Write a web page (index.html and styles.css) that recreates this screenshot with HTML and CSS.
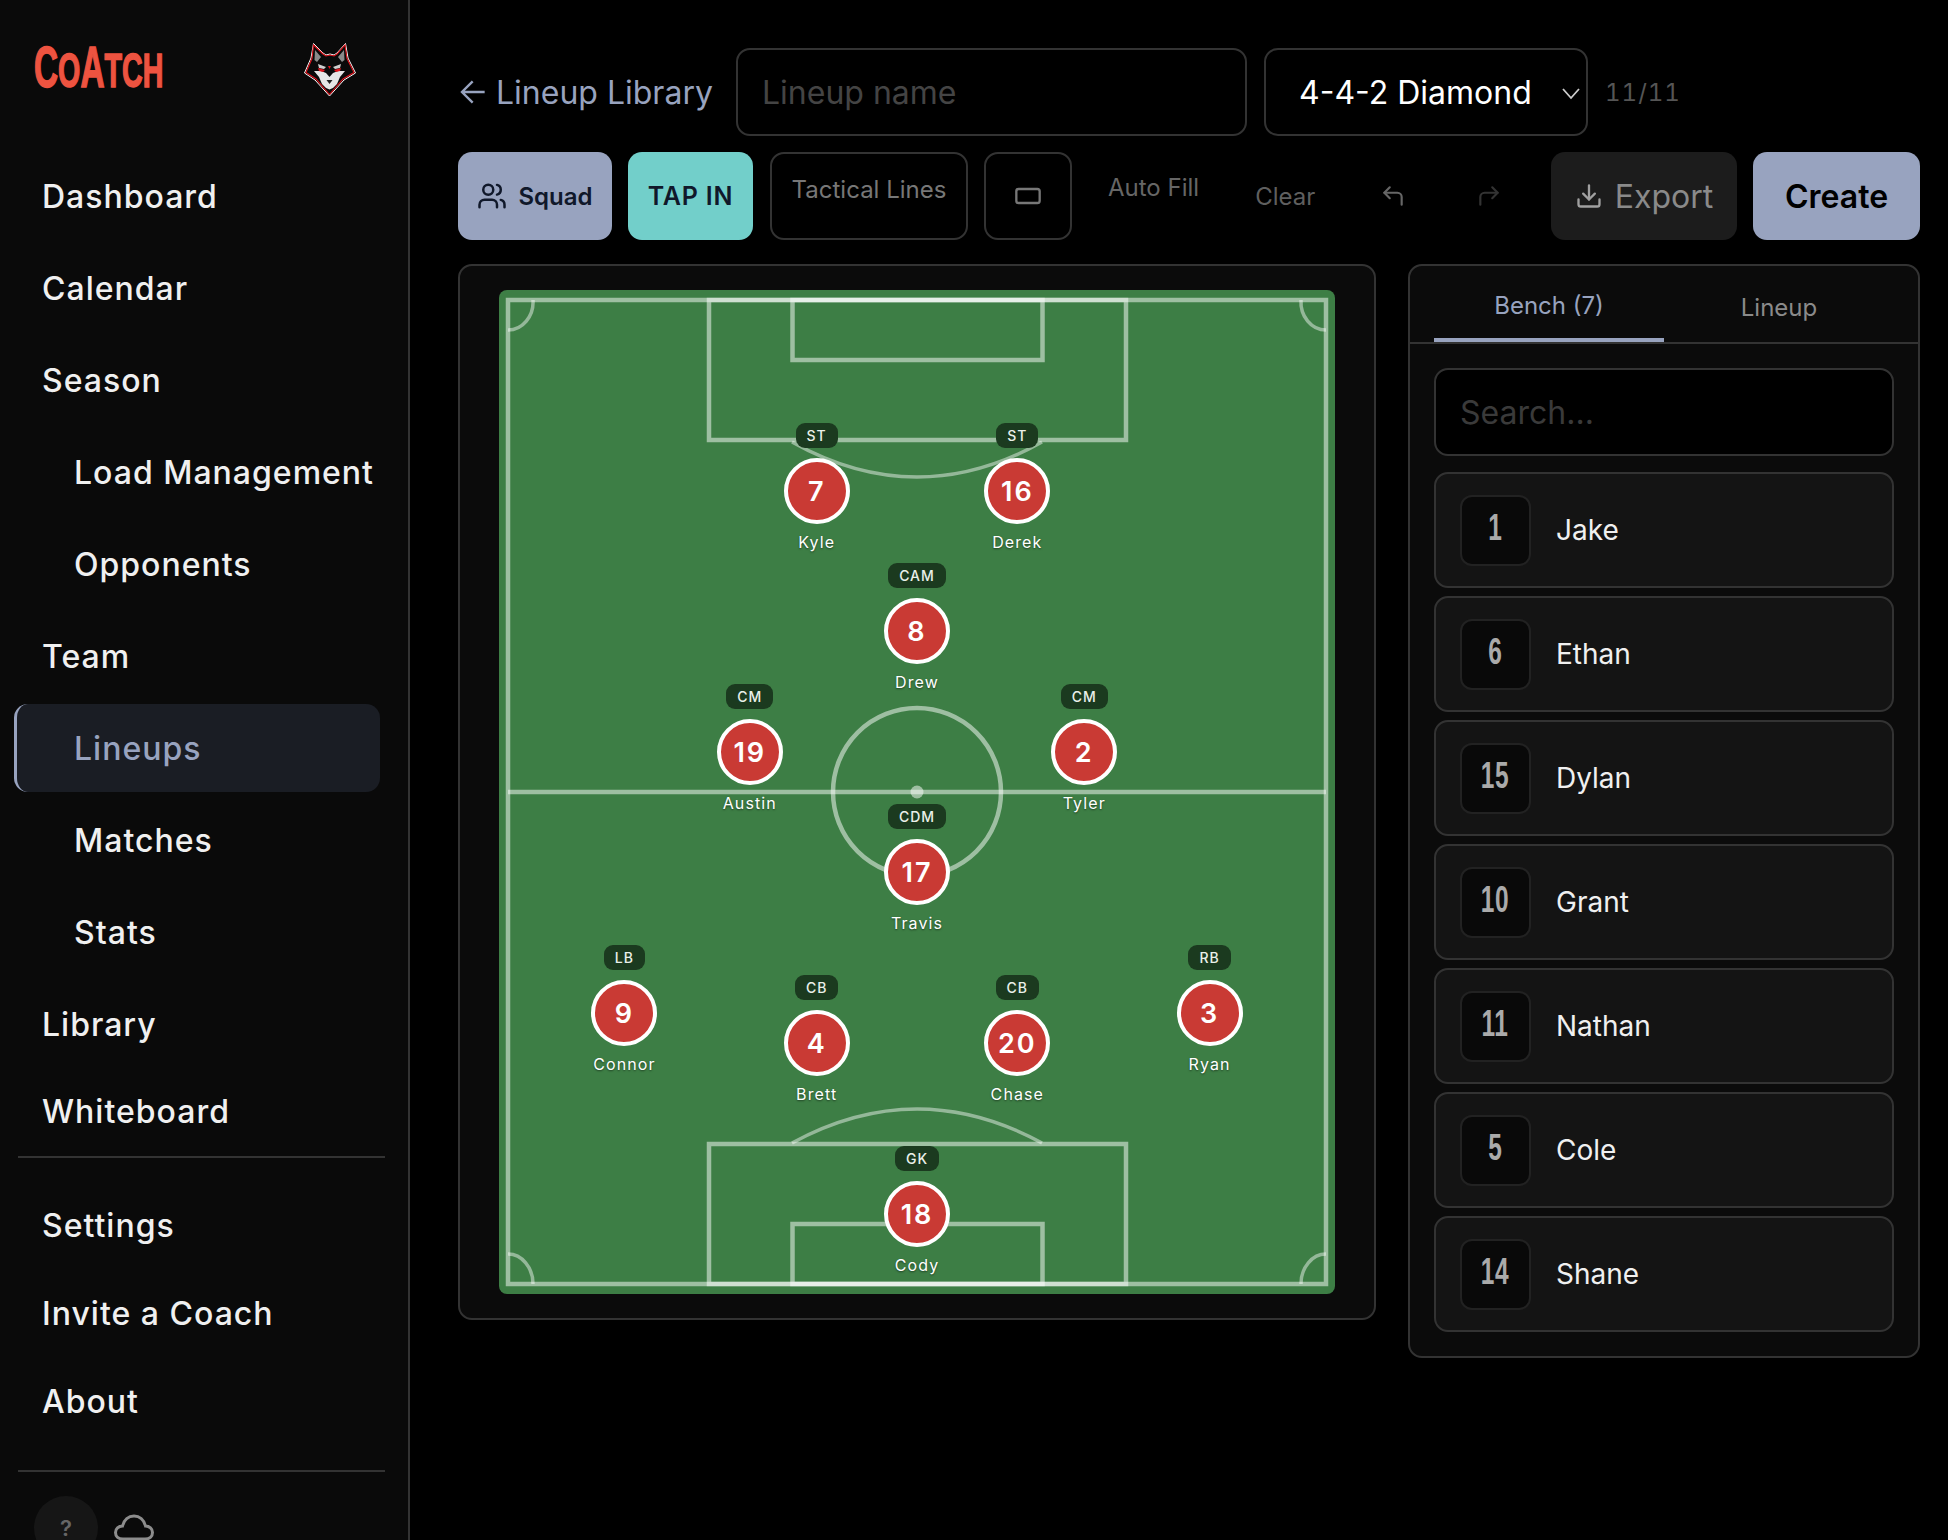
FILE: index.html
```html
<!DOCTYPE html>
<html lang="en">
<head>
<meta charset="utf-8">
<title>Lineups</title>
<link rel="stylesheet" href="styles.css">
</head>
<body>
<div class="app">
  <aside class="sidebar">
    <div class="brand">
      <div class="wordmark"><span class="cap">C</span>O<span class="cap">A</span>TCH</div>
      <svg class="wolf" viewBox="23 12 54 56" aria-hidden="true">
        <path d="M33.5 13.5 43 23 46 25 50 24 54 25 57 23 65.5 13.5 68 28 75.5 43 64 50 49.500 66 35 50 24.500 43 31 28Z" fill="#000" stroke="#fff" stroke-width="1"/>
        <path d="M33.5 15 43 24 46 26 50 25 54 26 57 24 65 15 67 28.500 74 42.500 63 49 49.500 64.500 36 49 26 42.500 32 28.500Z" fill="#0a0a0a" stroke="#e0141c" stroke-width="1.100"/>
        <path d="M35 20 41 27 37 32 34.500 30Z M64 20 58 27 62 32 64.500 30Z" fill="#8a8a8a"/>
        <path d="M38 34 46 37 44 39 39 38Z M61 34 53 37 55 39 60 38Z" fill="#cfcfcf"/>
        <path d="M34 41 41 41 46 43 49.500 47 53 43 58 41 65 41 60 47 57 54 53 58 49.500 59.500 46 58 42 54 39 47Z" fill="#e6e6e6"/>
        <path d="M38 38 45 40 43 42 39 41Z M61 38 54 40 56 42 60 41Z M48 36 51 36 49.500 39Z" fill="#e0141c"/>
        <path d="M46.500 50 52.500 50 49.500 54Z" fill="#222"/>
      </svg>
    </div>
    <nav class="nav">
      <a class="nav-item">Dashboard</a>
      <a class="nav-item">Calendar</a>
      <a class="nav-item">Season</a>
      <a class="nav-item sub">Load Management</a>
      <a class="nav-item sub">Opponents</a>
      <a class="nav-item">Team</a>
      <a class="nav-item sub active">Lineups</a>
      <a class="nav-item sub">Matches</a>
      <a class="nav-item sub">Stats</a>
      <a class="nav-item">Library</a>
      <a class="nav-item tight">Whiteboard</a>
    </nav>
    <div class="rule rule-a"></div>
    <nav class="nav nav-b">
      <a class="nav-item tight">Settings</a>
      <a class="nav-item tight">Invite a Coach</a>
      <a class="nav-item tight">About</a>
    </nav>
    <div class="rule rule-b"></div>
    <div class="side-foot">
      <div class="help">?</div>
      <svg class="cloud" viewBox="0 0 40 30" aria-hidden="true"><path d="M9 25C4 25 1.500 22 1.500 18.500 1.500 15 4.500 12 8.500 12 10 6 14.500 2 20 2 25.500 2 30 6 31.500 12 35.500 12 38.500 15 38.500 18.500 38.500 22 36 25 31 25Z"/></svg>
    </div>
  </aside>

  <main class="main">
    <div class="row-top">
      <a class="back"><svg class="back-arrow" viewBox="0 0 24 24"><path d="M20 12H3M11 20l-8-8 8-8"/></svg>Lineup Library</a>
      <input class="field name-input" placeholder="Lineup name">
      <div class="field select"><span>4-4-2 Diamond</span><svg class="chev" viewBox="0 0 24 24"><path d="m4 8 8 9 8-9"/></svg></div>
      <span class="count">11/11</span>
    </div>

    <div class="row-tools">
      <button class="btn squad"><svg class="ico" viewBox="0 0 24 24"><path d="M16 21v-2a4 4 0 0 0-4-4H6a4 4 0 0 0-4 4v2"/><circle cx="9" cy="7" r="4"/><path d="M22 21v-2a4 4 0 0 0-3-3.870"/><path d="M16 3.130a4 4 0 0 1 0 7.750"/></svg>Squad</button>
      <button class="btn tap">TAP IN</button>
      <button class="btn outline lines">Tactical Lines</button>
      <button class="btn outline square"><svg class="ico" viewBox="0 0 24 24"><rect x="2" y="6" width="20" height="12" rx="2"/></svg></button>
      <span class="ghost autofill">Auto Fill</span>
      <span class="ghost clear">Clear</span>
      <svg class="ico undo" viewBox="0 0 24 24"><path d="M9 14 4 9l5-5"/><path d="M20 20v-7a4 4 0 0 0-4-4H4"/></svg>
      <svg class="ico redo" viewBox="0 0 24 24"><path d="m15 14 5-5-5-5"/><path d="M4 20v-7a4 4 0 0 1 4-4h12"/></svg>
      <button class="btn export"><svg class="ico" viewBox="0 0 24 24"><path d="M21 15v4a2 2 0 0 1-2 2H5a2 2 0 0 1-2-2v-4"/><path d="m7 10 5 5 5-5"/><path d="M12 15V3"/></svg>Export</button>
      <button class="btn create">Create</button>
    </div>

    <div class="panels">
      <section class="panel pitch-panel">
        <div class="pitch">
          <svg class="lines-svg" viewBox="0 0 836 1004" aria-hidden="true">
            <rect x="9" y="10" width="818" height="984"/>
            <rect x="210" y="10" width="417" height="140"/>
            <rect x="293.500" y="10" width="250" height="60"/>
            <rect x="210" y="854" width="417" height="140"/>
            <rect x="293.500" y="934" width="250" height="60"/>
            <line x1="9" y1="502" x2="827" y2="502"/>
            <circle cx="418" cy="502" r="84"/>
            <circle class="spot" cx="418" cy="502" r="6.500"/>
            <path class="thin" d="M293 152Q418 222 543 152"/>
            <path class="thin" d="M293 853Q418 785 543 853"/>
            <path class="thin" d="M34 10A25 28 0 0 1 9 40"/>
            <path class="thin" d="M802 10A25 28 0 0 0 827 40"/>
            <path class="thin" d="M34 994A25 30 0 0 0 9 964"/>
            <path class="thin" d="M802 994A25 30 0 0 1 827 964"/>
          </svg>
          <div class="token" style="left:38%;top:20%"><span class="pos">ST</span><span class="disc">7</span><span class="who">Kyle</span></div>
          <div class="token" style="left:62%;top:20%"><span class="pos">ST</span><span class="disc">16</span><span class="who">Derek</span></div>
          <div class="token" style="left:50%;top:34%"><span class="pos">CAM</span><span class="disc">8</span><span class="who">Drew</span></div>
          <div class="token" style="left:30%;top:46%"><span class="pos">CM</span><span class="disc">19</span><span class="who">Austin</span></div>
          <div class="token" style="left:70%;top:46%"><span class="pos">CM</span><span class="disc">2</span><span class="who">Tyler</span></div>
          <div class="token" style="left:50%;top:58%"><span class="pos">CDM</span><span class="disc">17</span><span class="who">Travis</span></div>
          <div class="token" style="left:15%;top:72%"><span class="pos">LB</span><span class="disc">9</span><span class="who">Connor</span></div>
          <div class="token" style="left:85%;top:72%"><span class="pos">RB</span><span class="disc">3</span><span class="who">Ryan</span></div>
          <div class="token" style="left:38%;top:75%"><span class="pos">CB</span><span class="disc">4</span><span class="who">Brett</span></div>
          <div class="token" style="left:62%;top:75%"><span class="pos">CB</span><span class="disc">20</span><span class="who">Chase</span></div>
          <div class="token" style="left:50%;top:92%"><span class="pos">GK</span><span class="disc">18</span><span class="who">Cody</span></div>
        </div>
      </section>

      <section class="panel bench">
        <div class="tabs">
          <div class="tab on">Bench (7)</div>
          <div class="tab">Lineup</div>
        </div>
        <div class="bench-body">
          <input class="search" placeholder="Search...">
          <div class="player"><span class="num"><span class="digits">1</span></span><span class="pname">Jake</span></div>
          <div class="player"><span class="num"><span class="digits">6</span></span><span class="pname">Ethan</span></div>
          <div class="player"><span class="num"><span class="digits">15</span></span><span class="pname">Dylan</span></div>
          <div class="player"><span class="num"><span class="digits">10</span></span><span class="pname">Grant</span></div>
          <div class="player"><span class="num"><span class="digits">11</span></span><span class="pname">Nathan</span></div>
          <div class="player"><span class="num"><span class="digits">5</span></span><span class="pname">Cole</span></div>
          <div class="player"><span class="num"><span class="digits">14</span></span><span class="pname">Shane</span></div>
        </div>
      </section>
    </div>
  </main>
</div>
</body>
</html>
```

FILE: styles.css
```css
* { box-sizing: border-box; }
html, body { margin: 0; height: 100%; background: #000; overflow: hidden; }
body { font-family: Inter, "Liberation Sans", sans-serif; color: #fff; }

.app { display: flex; height: 1540px; overflow: hidden; }

/* sidebar */
.sidebar {
  width: 410px; flex: none; height: 1540px; overflow: hidden;
  background: #0a0a0a; border-right: 2px solid #333;
  padding: 0 24px 0 14px;
}
.brand { height: 152px; display: flex; align-items: flex-start; position: relative; }
.wordmark {
  margin: 37px 0 0 20px; color: #ee5340; font-family: "Liberation Sans", sans-serif;
  font-weight: 700; font-size: 49px; line-height: 60px; white-space: nowrap;
  -webkit-text-stroke: 1.500px #ee5340; transform: scaleX(.585); transform-origin: left center;
}
.wordmark .cap { font-size: 57px; }
.wolf { position: absolute; left: 289px; top: 42px; width: 54px; height: 56px; }

.nav { display: flex; flex-direction: column; gap: 4px; }
.nav-b { gap: 0; margin-top: 23px; }
.nav-item {
  height: 88px; display: flex; align-items: center; padding-left: 25px;
  font-size: 32px; font-weight: 500; letter-spacing: 1px; color: #f0f0f0; white-space: nowrap;
  border-radius: 14px; border-left: 3px solid transparent;
}
.nav-item.sub { padding-left: 57px; }
.nav > .nav-item.tight:last-child { margin-top: -5px; }
.nav-b > .nav-item.tight:last-child { margin-top: 0; }
.nav-item.active { background: #1a1d24; color: #98a3bf; border-left-color: #98a3bf; width: 366px; }
.rule { height: 2px; background: #333; width: 367px; margin-left: 4px; }
.rule-a { margin-top: 1px; }
.rule-b { margin-top: 25px; }
.side-foot { display: flex; align-items: flex-start; margin: 24px 0 0 20px; }
.help {
  width: 64px; height: 64px; border-radius: 50%; background: #161616; color: #666;
  font-size: 22px; line-height: 22px; font-weight: 600; text-align: center; padding-top: 21px;
}
.cloud { width: 40px; height: 30px; margin: 18px 0 0 16px; fill: none; stroke: #8c8c8c; stroke-width: 3; }

/* main */
.main { flex: 1; min-width: 0; padding: 48px 28px 0 48px; display: flex; flex-direction: column; }
.row-top { display: flex; align-items: center; height: 88px; }
.back { display: flex; align-items: center; color: #98a3bf; font-size: 32px; white-space: nowrap; margin: 0 24px 0 0; width: 254px; }
.back-arrow { width: 32px; height: 32px; flex: none; fill: none; stroke: #98a3bf; stroke-width: 1.800; margin-right: 6px; }
.field {
  height: 88px; border: 2px solid #333; border-radius: 14px; background: #000;
  font: 400 32px Inter, "Liberation Sans", sans-serif; color: #fff;
}
.name-input { width: 511px; padding: 0 24px; outline: none; }
.name-input::placeholder { color: #444; opacity: 1; }
.select { width: 324px; margin-left: 17px; display: flex; align-items: center; padding-left: 33px; position: relative; white-space: nowrap; }
.chev { position: absolute; right: 3px; top: 31px; width: 24px; height: 24px; fill: none; stroke: #ccc; stroke-width: 1.800; }
.count { margin-left: 17px; font-size: 24px; color: #555; letter-spacing: 1px; font-variant-numeric: tabular-nums; }

.row-tools { display: flex; align-items: center; margin-top: 16px; height: 88px; }
.btn {
  height: 88px; border: 0; border-radius: 14px; font-family: Inter, "Liberation Sans", sans-serif;
  display: flex; align-items: center; justify-content: center; white-space: nowrap; padding: 0;
}
.ico { width: 28px; height: 28px; fill: none; stroke: currentColor; stroke-width: 2; stroke-linecap: round; stroke-linejoin: round; flex: none; }
.squad { width: 154px; background: #98a3bf; color: #10182a; font-size: 24px; font-weight: 600; gap: 11px; }
.squad .ico { width: 30px; height: 30px; }
.tap { width: 125px; margin-left: 16px; background: #72cfca; color: #10182a; font-size: 25px; font-weight: 600; letter-spacing: .8px; }
.outline { background: #000; border: 2px solid #333; color: #777; }
.lines { width: 198px; margin-left: 17px; font-size: 24px; align-items: flex-start; padding-top: 21px; }
.square { width: 88px; margin-left: 16px; }
.ghost { font-size: 24px; color: #666; white-space: nowrap; }
.autofill { margin-left: 36px; margin-top: -18px; }
.clear { margin-left: 56px; color: #5f5f5f; }
.undo { width: 26px; height: 26px; color: #666; margin-left: 65px; }
.redo { width: 26px; height: 26px; color: #333; margin-left: 70px; }
.export { width: 186px; margin-left: auto; background: #1c1c1c; color: #8a8a8a; font-size: 32px; gap: 12px; }
.export .ico { color: #a0a0a0; }
.create { width: 167px; margin-left: 16px; background: #98a3bf; color: #000; font-size: 32px; font-weight: 600; }

/* panels */
.panels { display: flex; align-items: flex-start; gap: 32px; margin-top: 24px; }
.panel { border: 2px solid #333; border-radius: 14px; background: #0b0b0b; }
.pitch-panel { width: 918px; padding: 24px 39px; }
.pitch { position: relative; width: 836px; height: 1004px; background: #3d7e45; border-radius: 8px; }
.lines-svg { position: absolute; inset: 0; width: 100%; height: 100%; fill: none; stroke: rgba(255,255,255,.5); stroke-width: 4.500; }
.lines-svg .thin { stroke-width: 3.500; stroke: rgba(255,255,255,.45); }
.lines-svg .spot { fill: rgba(255,255,255,.5); stroke: none; }

.token {
  position: absolute; transform: translate(-50%, -68px);
  display: flex; flex-direction: column; align-items: center; white-space: nowrap;
}
.pos {
  height: 25px; padding: 0 11px; border-radius: 9px; background: #1b3a1f; color: #eaf0ea;
  font-size: 14px; font-weight: 500; letter-spacing: 1px; line-height: 25px;
}
.disc {
  width: 66px; height: 66px; margin-top: 10px; padding-top: 1px; border-radius: 50%; border: 4px solid #fff; background: #c93a34;
  display: flex; align-items: center; justify-content: center; font-size: 27px; font-weight: 600; letter-spacing: 2px; color: #fff;
}
.who { margin-top: 7px; font-size: 16px; line-height: 22px; letter-spacing: 1.100px; color: #fff; text-shadow: 0 1px 2px rgba(0,0,0,.5); }

.bench { width: 512px; }
.tabs { display: flex; height: 78px; border-bottom: 2px solid #333; padding-left: 24px; }
.tab { width: 230px; height: 76px; text-align: center; color: #8a8a8a; font-size: 24px; padding-top: 27px; flex: none; }
.tab.on { color: #98a3bf; border-bottom: 4px solid #98a3bf; padding-top: 25px; }
.bench-body { padding: 24px; display: flex; flex-direction: column; gap: 8px; }
.search {
  height: 88px; margin-bottom: 8px; width: 100%; border: 2px solid #333; border-radius: 14px; background: #000;
  padding: 0 24px; font: 400 32px Inter, "Liberation Sans", sans-serif; color: #fff; outline: none;
}
.search::placeholder { color: #3a3a3a; opacity: 1; }
.player {
  height: 116px; display: flex; align-items: center; padding-left: 24px; gap: 25px;
  background: #141414; border: 2px solid #333; border-radius: 14px;
}
.num {
  width: 71px; height: 71px; flex: none; display: flex; align-items: center; justify-content: center;
  background: #090909; border: 2px solid #222; border-radius: 12px; color: #aaa;
  font-family: "Liberation Sans", sans-serif; font-weight: 700; font-size: 36px; padding-bottom: 4px; letter-spacing: 1px;
}
.digits { display: inline-block; transform: scaleX(.68); }
.pname { font-size: 28px; color: #f0f0f0; }
```
